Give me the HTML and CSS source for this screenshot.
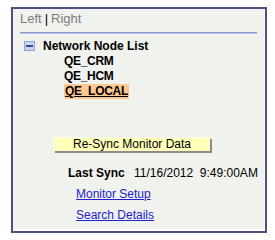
FILE: index.html
```html
<!DOCTYPE html>
<html>
<head>
<meta charset="utf-8">
<link rel="stylesheet" href="styles.css">
</head>
<body>
<div class="panel">
  <div class="fill">
    <div class="tabs"><span>Left</span><span class="sep">|</span><span>Right</span></div>
    <div class="rule"></div>
    <div class="tree">
      <div class="node">
        <svg class="minus" width="11" height="10" viewBox="0 0 11 10">
          <rect x="0.5" y="0.5" width="10" height="9" fill="#c8d4f0" stroke="#8ea2d8"/>
          <rect x="2" y="4" width="7" height="2" fill="#33449a"/>
        </svg>
        <span class="node-label">Network Node List</span>
      </div>
      <div class="child">QE_CRM</div>
      <div class="child">QE_HCM</div>
      <div class="child"><span class="current">QE_LOCAL</span></div>
    </div>
    <div class="btn-row"><button class="btn">Re-Sync Monitor Data</button></div>
    <div class="sync"><span class="sync-label">Last Sync</span><span class="sync-date">11/16/2012&nbsp;&nbsp;9:49:00AM</span></div>
    <div class="link-row"><a href="#" class="link">Monitor Setup</a></div>
    <div class="link-row"><a href="#" class="link">Search Details</a></div>
  </div>
</div>
</body>
</html>
```
FILE: styles.css
```css
html, body {
  margin: 0;
  padding: 0;
  background: #ffffff;
}
body {
  font-family: "Liberation Sans", Arial, sans-serif;
  font-size: 12px;
  line-height: 15px;
  color: #000;
}
.panel {
  margin: 7px 0 0 11px;
  width: 251px;
  height: 220px;
  border: 2px solid #4f4f86;
  background: #ffffff;
  padding: 0 1px 2px 0;
  box-sizing: content-box;
}
.fill {
  background: #f0f2ed;
  height: 100%;
  overflow: hidden;
}
.tabs {
  padding: 2px 7px 0;
  color: #7d7d7d;
  font-size: 13px;
  height: 15px;
}
.tabs .sep {
  color: #000;
  margin: 0 3px 0 3px;
}
.rule {
  margin: 6px 7px 0 7px;
  height: 1px;
  border-top: 1px solid #8596d0;
  background: #b9c4e6;
}
.tree {
  margin-top: 4px;
  font-weight: bold;
}
.node {
  display: flex;
  align-items: center;
  height: 16px;
  padding-left: 11px;
}
.minus {
  display: block;
  margin-right: 8px;
}
.child {
  padding-left: 51px;
  height: 15px;
  letter-spacing: -0.3px;
}
.current {
  background: #ffc890;
  text-decoration: underline;
  padding: 0 1px 1px 1px;
}
.btn-row {
  margin-top: 38px;
  padding-left: 40px;
  height: 16px;
}
.btn {
  display: block;
  width: 157px;
  height: 14px;
  padding: 0;
  margin: 0;
  border: none;
  border-top: 1px solid #fbfbe8;
  border-left: 1px solid #fbfbe8;
  background: #ffffb9;
  box-shadow: 2px 2px 0 #8c8c8c;
  font-family: "Liberation Sans", Arial, sans-serif;
  font-size: 12px;
  line-height: 13px;
  color: #000;
  text-align: center;
}
.sync {
  margin-top: 13px;
  padding-left: 55px;
  display: flex;
  height: 15px;
}
.sync-label {
  font-weight: bold;
  width: 66px;
}
.link-row {
  margin-top: 6px;
  padding-left: 63px;
  height: 15px;
}
.link {
  color: #2222cc;
  text-decoration: underline;
}
```
